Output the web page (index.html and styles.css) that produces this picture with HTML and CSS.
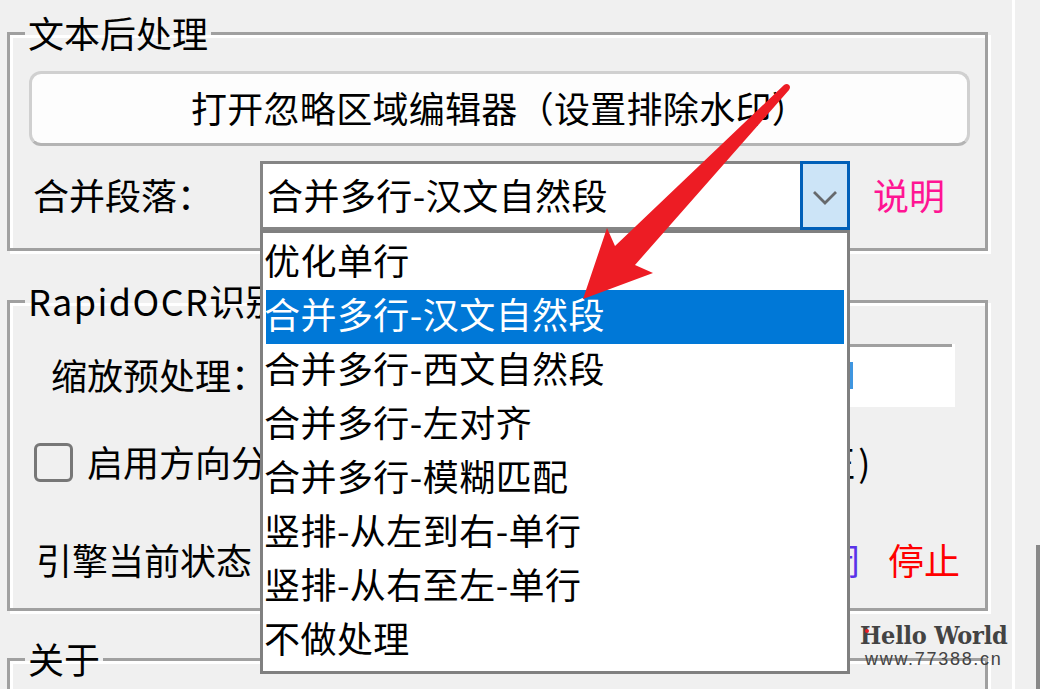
FILE: index.html
```html
<!DOCTYPE html>
<html lang="zh-CN">
<head>
<meta charset="utf-8">
<title>文本后处理</title>
<link rel="stylesheet" href="styles.css">
</head>
<body>
<div class="page">
  <main class="content">
    <fieldset class="group group-text">
      <legend>文本后处理</legend>
      <button class="wide-btn" type="button">打开忽略区域编辑器（设置排除水印）</button>
      <div class="merge-row">
        <span class="merge-label">合并段落：</span>
        <div class="combo">
          <span class="combo-value">合并多行-汉文自然段</span>
          <span class="combo-btn">
            <svg class="chevron" width="28" height="18" viewBox="0 0 28 18"><polyline points="3,3 14,14 25,3" fill="none" stroke="#66696c" stroke-width="2.8"/></svg>
          </span>
          <ul class="popup">
            <li>优化单行</li>
            <li class="selected">合并多行-汉文自然段</li>
            <li>合并多行-西文自然段</li>
            <li>合并多行-左对齐</li>
            <li>合并多行-模糊匹配</li>
            <li>竖排-从左到右-单行</li>
            <li>竖排-从右至左-单行</li>
            <li>不做处理</li>
          </ul>
        </div>
        <span class="help">说明</span>
      </div>
    </fieldset>

    <fieldset class="group group-ocr">
      <legend><span class="latin">RapidOCR</span>识别库参数</legend>
      <div class="scale-row">
        <span class="scale-label">缩放预处理：</span>
        <div class="scale-box"><span class="scale-mark"></span></div>
      </div>
      <label class="check-row">
        <span class="checkbox"></span>
        <span class="check-text">启用方向分类器(适用于识别旋转的文本并作校正<span class="paren">)</span></span>
      </label>
      <div class="status-row">
        <span class="status-label">引擎当前状态</span>
        <span class="status-value">已关闭</span>
        <span class="status-stop">停止</span>
      </div>
    </fieldset>

    <fieldset class="group group-about">
      <legend>关于</legend>
    </fieldset>
  </main>
  <div class="rail"><div class="thumb"></div></div>

  <svg class="arrow" width="1040" height="689" viewBox="0 0 1040 689">
    <path d="M583 299 L607 228 L615 246 L784 85 Q787 83 789 85 Q791 87 789 90 L635 265 L653 273 Z" fill="#ed1c24"/>
  </svg>

  <div class="watermark">
    <span class="wm-title">Hello World</span>
    <span class="wm-url">www.77388.cn</span>
    <span class="wm-dot"></span>
  </div>
</div>
</body>
</html>
```
FILE: styles.css
```css
* { box-sizing: border-box; }

html, body {
  margin: 0;
  padding: 0;
  height: 100%;
  overflow: hidden;
  background: #f0f0f0;
}

body {
  font-family: "Noto Sans CJK SC", "Noto Sans", sans-serif;
  font-size: 36px;
  line-height: 36px;
  color: #000;
}

.page {
  position: relative;
  display: flex;
  width: 1040px;
  height: 689px;
  overflow: hidden;
}

.content {
  width: 1015px;
  padding: 15px 24px 0 7px;
  border-right: 3px solid #fff;
  flex: none;
}

.rail {
  flex: 1;
  display: flex;
  justify-content: flex-end;
  padding-top: 545px;
}

.thumb {
  width: 4px;
  height: 144px;
  background: #888;
}

.group {
  margin: 0;
  padding: 0;
  min-width: 0;
  border: 3px solid #a0a0a0;
  box-shadow: inset 3px 3px 0 #fff, 3px 3px 0 #fff;
}

.group legend {
  margin-left: 15px;
  padding: 0 3px;
  line-height: 34px;
  height: 37px;
  white-space: nowrap;
}

.latin { letter-spacing: 1.4px; }

.group-text { padding: 19px 15px 18px 0; }
.group-ocr { margin-top: 32px; padding-top: 24px; padding-bottom: 29px; }
.group-about { margin-top: 30px; height: 120px; }

.wide-btn {
  display: block;
  width: 941px;
  height: 75px;
  margin-left: 19px;
  padding: 0 0 4px 0;
  font: inherit;
  letter-spacing: 0.3px;
  color: #000;
  background: #fdfdfd;
  border: 3px solid #d0d0d0;
  border-bottom-color: #b4b4b4;
  border-radius: 12px;
}

.merge-row {
  display: flex;
  align-items: center;
  margin-top: 15px;
}

.merge-label {
  width: 250px;
  padding: 0 0 4px 23px;
  flex: none;
}

.combo {
  position: relative;
  display: flex;
  align-items: center;
  width: 590px;
  height: 69px;
  flex: none;
  background: #fff;
  border: 3px solid #858585;
}

.combo-value {
  flex: 1;
  padding: 0 0 4px 4px;
  letter-spacing: 0.45px;
}

.combo-btn {
  display: flex;
  align-items: center;
  justify-content: center;
  width: 50px;
  height: 69px;
  margin: 0 -3px 0 0;
  flex: none;
  background: #cce4f7;
  border: 3px solid #005fb8;
}

.chevron { display: block; margin-top: 4px; }

.popup {
  position: absolute;
  top: 66px;
  left: -3px;
  width: 590px;
  margin: 0;
  padding: 3px;
  list-style: none;
  background: #fff;
  border: 3px solid #808080;
}

.popup li {
  height: 54px;
  line-height: 47px;
  text-indent: -2px;
  letter-spacing: 0.45px;
}

.popup .selected {
  color: #fff;
  background: #0078d7;
}

.help {
  margin-left: 23px;
  padding-bottom: 4px;
  color: #ff1493;
}

.scale-row {
  display: flex;
  align-items: center;
  height: 63px;
  padding-right: 30px;
}

.scale-label {
  width: 250px;
  padding: 0 0 4px 41px;
  flex: none;
  white-space: nowrap;
}

.scale-box {
  flex: 1;
  height: 63px;
  display: flex;
  align-items: center;
  padding-left: 590px;
  background: linear-gradient(#a0a0a0, #a0a0a0) 0 0 / calc(100% - 3px) 3px no-repeat, #fff;
}

.scale-mark {
  width: 3px;
  height: 27px;
  background: #3f96e0;
}

.check-row {
  display: flex;
  align-items: center;
  height: 39px;
  margin-top: 36px;
  padding-left: 24px;
  white-space: nowrap;
}

.checkbox {
  width: 39px;
  height: 39px;
  flex: none;
  border: 3px solid #777;
  border-radius: 6px;
}

.check-text {
  margin-left: 14px;
  padding-bottom: 4px;
}

.paren { margin-left: 3px; }

.status-row {
  display: flex;
  align-items: center;
  height: 36px;
  margin-top: 61px;
  padding: 0 25px 0 26px;
}

.status-label { flex: 1; padding-bottom: 4px; }

.status-value {
  padding-bottom: 4px;
  color: #5a32e8;
  margin-right: 28px;
}

.status-stop { padding-bottom: 4px; color: #ff0000; }

.arrow {
  position: absolute;
  top: 0;
  left: 0;
  pointer-events: none;
}

.watermark {
  position: absolute;
  top: 621px;
  left: 860px;
  width: 148px;
  color: #434343;
}

.wm-title {
  display: block;
  font-family: "DejaVu Serif Condensed", "DejaVu Serif", serif;
  font-weight: 700;
  font-stretch: condensed;
  font-size: 25px;
  line-height: 30px;
  letter-spacing: -0.2px;
  white-space: nowrap;
}

.wm-url {
  display: block;
  font-family: "Liberation Sans", sans-serif;
  font-size: 18px;
  line-height: 17px;
  letter-spacing: 1.7px;
  margin-left: 5px;
  white-space: nowrap;
}

.wm-dot {
  position: absolute;
  top: 8px;
  left: 5px;
  width: 4px;
  height: 4px;
  border-radius: 50%;
  background: #ed1c24;
}
```
